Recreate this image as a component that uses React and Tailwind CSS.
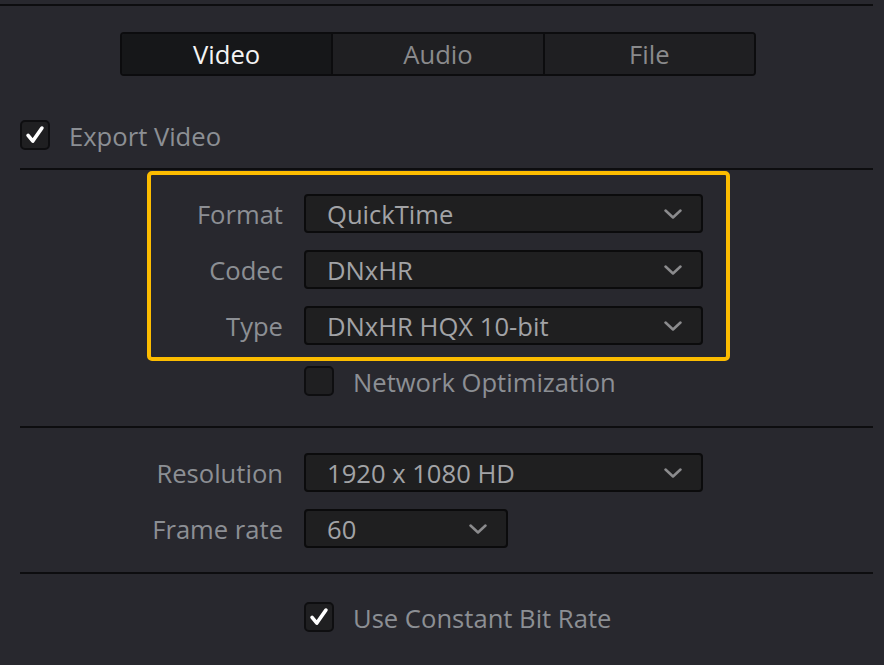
import React from "react";

const font = { fontFamily: '"Open Sans", "Noto Sans", sans-serif' };

const Check = () => (
  <svg width="30" height="30" viewBox="0 0 30 30">
    <path
      d="M7 15.5 L12.5 22 L23 7"
      fill="none"
      stroke="#ffffff"
      strokeWidth="4.2"
      strokeLinecap="round"
      strokeLinejoin="round"
    />
  </svg>
);

const Chevron = () => (
  <svg width="18" height="10" viewBox="0 0 18 10">
    <path
      d="M1.5 1.5 L9 8.5 L16.5 1.5"
      fill="none"
      stroke="#8b8b8d"
      strokeWidth="2.5"
      strokeLinecap="round"
      strokeLinejoin="round"
    />
  </svg>
);

const Checkbox = ({ checked, label }) => (
  <div className="flex items-center gap-[19px]">
    <div className="w-[30px] h-[30px] rounded-[5px] bg-[#1f1f21] border-2 border-[#0e0e10] flex items-center justify-center">
      {checked && <Check />}
    </div>
    <span className="pt-[4px] text-[25.6px] leading-none text-[#8c8f94]">{label}</span>
  </div>
);

const Dropdown = ({ value, width = "w-[399px]" }) => (
  <div
    className={`${width} h-[39px] rounded-[4px] bg-[#1f1f20] border-2 border-[#0b0b0c] flex items-center justify-between pl-[21px] pr-[19px]`}
  >
    <span className="pt-[2px] text-[25.6px] leading-none text-[#a2a3a6]">{value}</span>
    <Chevron />
  </div>
);

const Row = ({ label, labelWidth, children }) => (
  <div className="flex items-center gap-[21px]">
    <div
      className={`${labelWidth} pt-[2px] text-right text-[25.6px] leading-none text-[#8c8f94]`}
    >
      {label}
    </div>
    {children}
  </div>
);

const Separator = ({ className = "" }) => (
  <div className={`ml-[20px] mr-[11px] h-[2px] bg-[#0d0d0f] ${className}`} />
);

export default function App() {
  const tabs = ["Video", "Audio", "File"];

  return (
    <div className="w-[884px] h-[665px] bg-[#28282e] overflow-hidden" style={font}>
      {/* top rule */}
      <div className="pt-[4px] mr-[11px]">
        <div className="h-[2px] bg-[#0d0d0f]" />
      </div>

      {/* Tabs */}
      <div className="ml-[120px] mt-[26px] w-[636px] h-[44px] flex rounded-[4px] border-2 border-[#0c0c0e] overflow-hidden">
        {tabs.map((tab, i) => (
          <div
            key={tab}
            className={`flex-1 flex items-center justify-center pt-[1px] text-[25.6px] leading-none ${
              i === 0 ? "bg-[#161719] text-[#f4f4f4]" : "bg-[#1f1f22] text-[#8a8a8c]"
            } ${i > 0 ? "border-l-2 border-[#0c0c0e]" : ""}`}
          >
            {tab}
          </div>
        ))}
      </div>

      {/* Export Video */}
      <div className="ml-[20px] mt-[44px]">
        <Checkbox checked label="Export Video" />
      </div>

      <Separator className="mt-[18px]" />

      {/* Highlighted group */}
      <div className="ml-[147px] mt-[1px] w-[583px] h-[190px] border-4 border-[#fcbc00] rounded-[5px] pt-[19px] flex flex-col gap-[17px]">
        <Row label="Format" labelWidth="w-[132px]">
          <Dropdown value="QuickTime" />
        </Row>
        <Row label="Codec" labelWidth="w-[132px]">
          <Dropdown value="DNxHR" />
        </Row>
        <Row label="Type" labelWidth="w-[132px]">
          <Dropdown value="DNxHR HQX 10-bit" />
        </Row>
      </div>

      <div className="ml-[304px] mt-[5px]">
        <Checkbox label="Network Optimization" />
      </div>

      <Separator className="mt-[30px]" />

      {/* Resolution / frame rate */}
      <div className="mt-[25px] flex flex-col gap-[17px]">
        <Row label="Resolution" labelWidth="w-[283px]">
          <Dropdown value="1920 x 1080 HD" />
        </Row>
        <Row label="Frame rate" labelWidth="w-[283px]">
          <Dropdown value="60" width="w-[204px]" />
        </Row>
      </div>

      <Separator className="mt-[24px]" />

      <div className="ml-[304px] mt-[28px]">
        <Checkbox checked label="Use Constant Bit Rate" />
      </div>
    </div>
  );
}
